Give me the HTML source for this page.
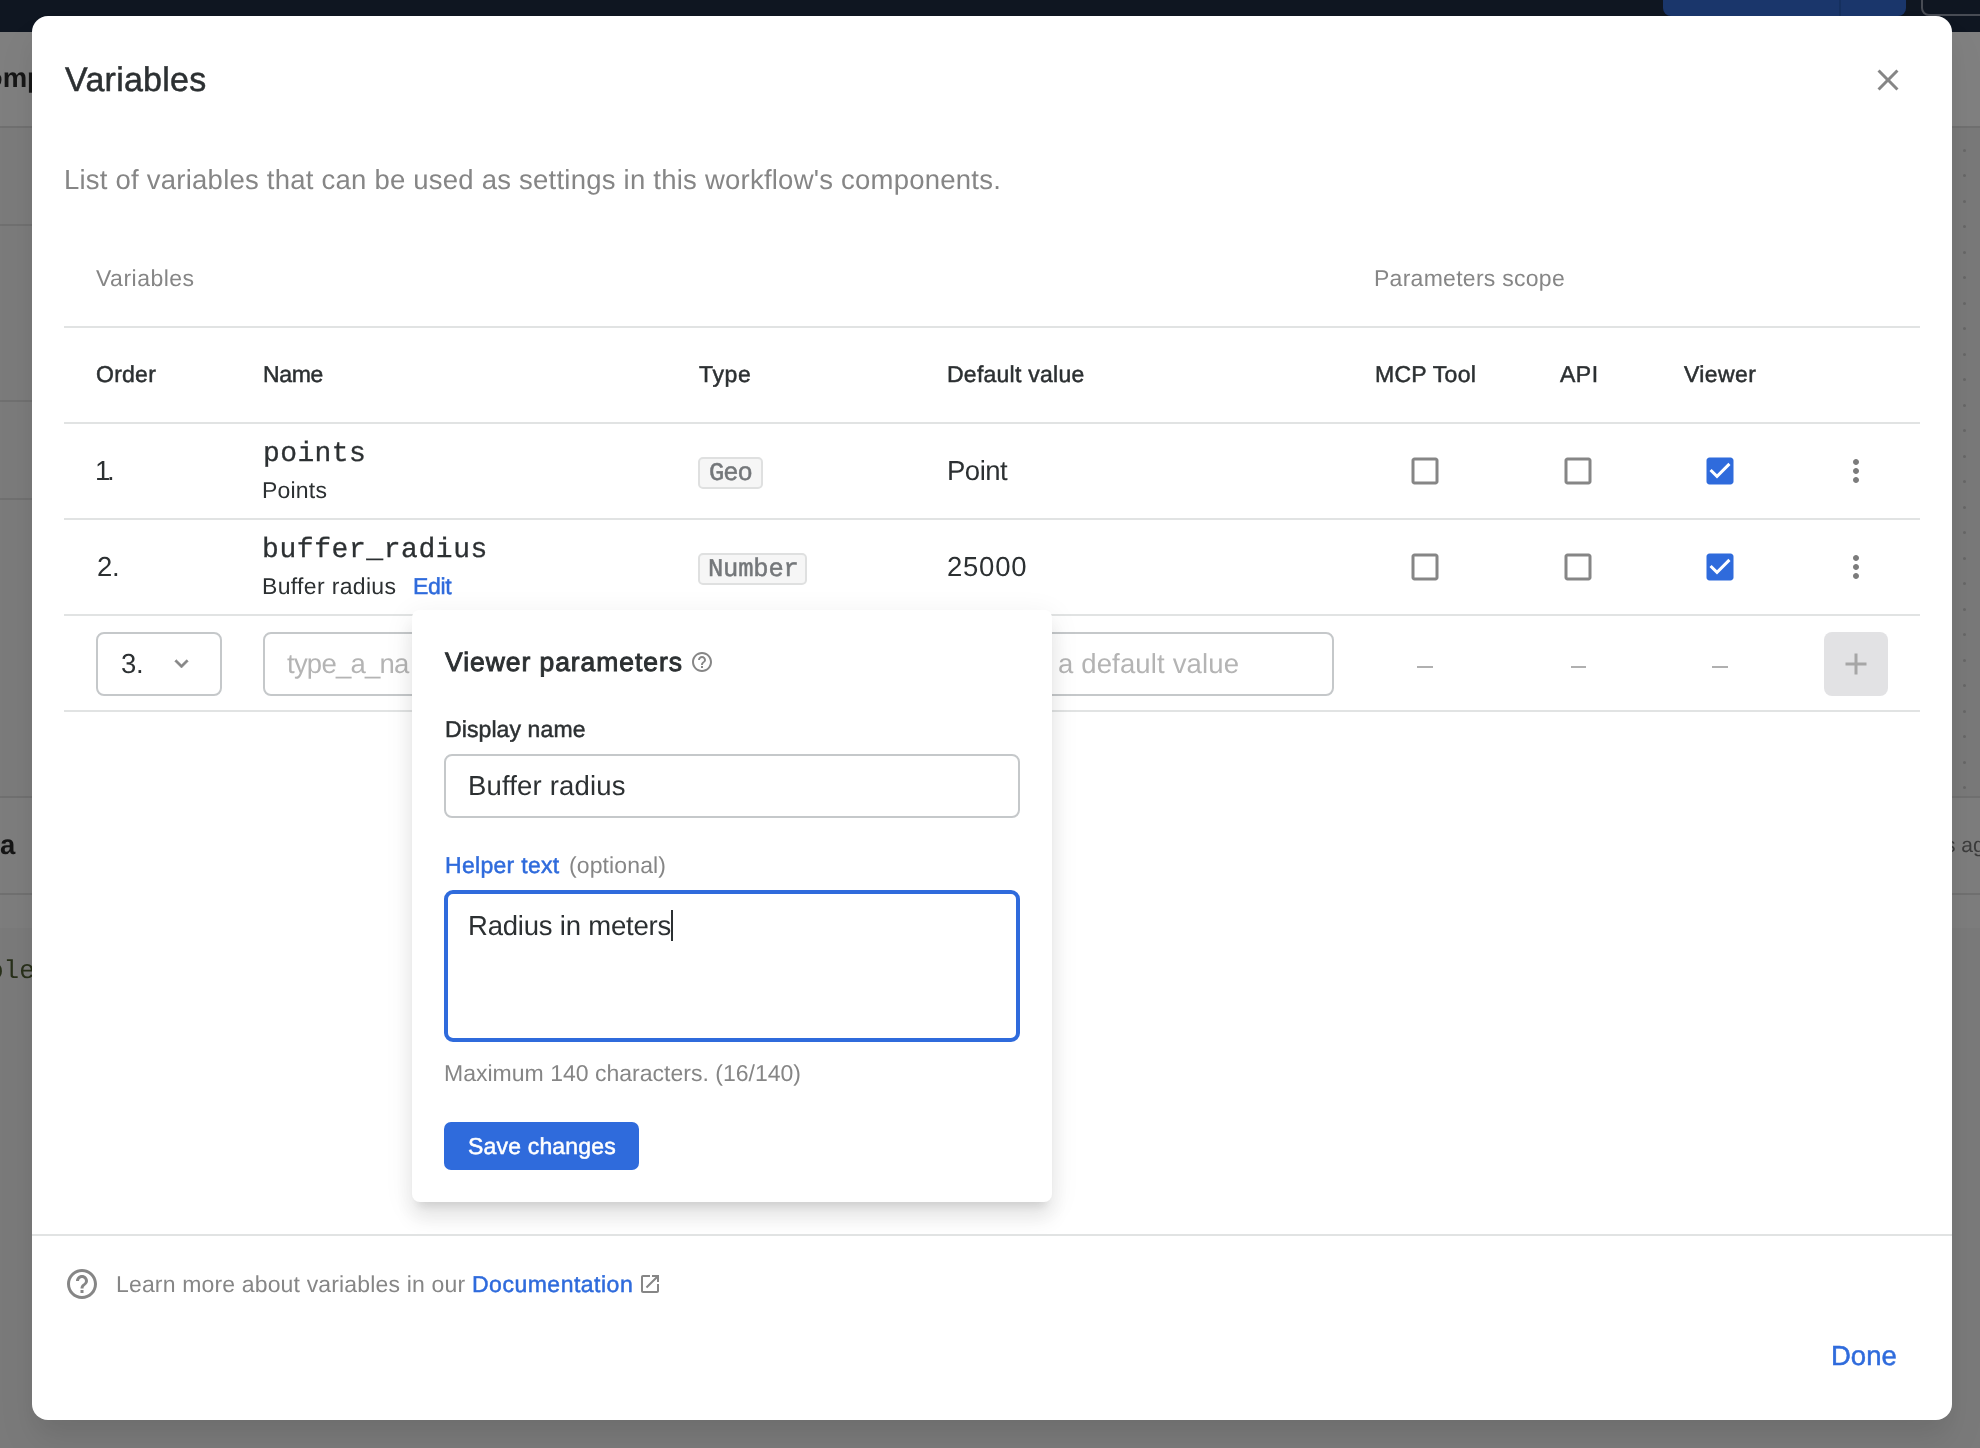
<!DOCTYPE html>
<html lang="en">
<head>
<meta charset="utf-8">
<title>Variables</title>
<style>
*{box-sizing:border-box;margin:0;padding:0}
html,body{width:1980px;height:1448px;overflow:hidden;background:#7f7f7f;font-family:"Liberation Sans",sans-serif;}
body{position:relative}
.abs{position:absolute}
.t{position:absolute;white-space:nowrap;height:40px;line-height:40px;margin-top:-20px;color:#2c3032;will-change:transform;-webkit-font-smoothing:antialiased;text-rendering:geometricPrecision}
.mono{font-family:"Liberation Mono",monospace}
.g{color:#868686}
.b{color:#2f6bdc}
.hl{position:absolute;height:2px;background:#e1e3e3}
/* background */
#topbar{left:0;top:0;width:1980px;height:32px;background:#0f1621}
#tb-blue{left:1663px;top:-12px;width:243px;height:28px;border-radius:8px;background:#1a366b}
#tb-div{left:1839px;top:0;width:2px;height:17px;background:#15305f}
#tb-out{left:1921px;top:-12px;width:80px;height:28px;border-radius:8px;border:2px solid #484c54;background:#0f1621}
#bg-left{left:0;top:32px;width:40px;height:1416px;background:#7b7b7b}
#bg-left2{left:0;top:32px;width:40px;height:94px;background:#7f7f7f}
#bg-right{left:1940px;top:32px;width:40px;height:1416px;background:#797979}
#bg-right2{left:1940px;top:32px;width:40px;height:94px;background:#808080}
#bg-band{left:0;top:796px;width:1980px;height:132px;background:#7d7d7d}
#bg-low{left:0;top:928px;width:1980px;height:520px;background:#7a7a7a}
.bl{position:absolute;height:2px;background:#707070}
.bd{position:absolute;left:1963px;width:3px;height:3px;border-radius:50%;background:#686868}
/* modal */
#modal{left:32px;top:16px;width:1920px;height:1404px;background:#fff;border-radius:16px;box-shadow:0 16px 28px -4px rgba(0,0,0,.07),0 24px 40px 4px rgba(0,0,0,.04)}
.badge{position:absolute;height:32px;border:2px solid #dfe0e0;border-radius:5px;background:#f6f6f6}
.inp{position:absolute;border:2px solid #c5c8ca;border-radius:8px;background:#fff}
.h{font-size:23px;color:#2c3032;-webkit-text-stroke:0.5px currentColor}
.m{-webkit-text-stroke:0.5px currentColor}
.bt{font-size:25.5px;color:#74777a;-webkit-text-stroke:0.5px currentColor}
.ph{color:#b4b4b4}
.dash{width:15.5px;height:2px;background:#b0b0b0}
#pop{left:412px;top:610px;width:640px;height:592px;background:#fff;border-radius:8px;box-shadow:0 10px 10px -6px rgba(0,0,0,.10),0 16px 20px 2px rgba(0,0,0,.07),0 6px 28px 4px rgba(0,0,0,.055)}
</style>
</head>
<body>
<!-- background app -->
<div class="abs" id="bg-left"></div>
<div class="abs" id="bg-left2"></div>
<div class="abs" id="bg-right"></div>
<div class="abs" id="bg-right2"></div>
<div class="abs" id="bg-low"></div>
<div class="abs" id="bg-band"></div>
<div class="abs" id="topbar"></div>
<div class="abs" id="tb-blue"></div>
<div class="abs" id="tb-div"></div>
<div class="abs" id="tb-out"></div>
<div class="bl" style="left:0;top:126px;width:1980px"></div>
<div class="bl" style="left:0;top:224px;width:40px"></div>
<div class="bl" style="left:0;top:400px;width:40px"></div>
<div class="bl" style="left:0;top:498px;width:40px"></div>
<div class="bl" style="left:0;top:796px;width:1980px"></div>
<div class="bl" style="left:0;top:893px;width:1980px"></div>
<div class="t" id="bgt1" style="left:-34px;top:78px;font-size:27.5px;font-weight:bold;color:#161616">Comp</div>
<div class="t" id="bgt2" style="left:0px;top:845px;font-size:27.5px;font-weight:bold;color:#161616">a</div>
<div class="t mono" id="bgt3" style="left:-12px;top:971px;font-size:26px;color:#28301a;width:44px;overflow:hidden">ole</div>
<div class="t" id="bgt4" style="left:1945px;top:846px;font-size:21px;color:#3c3c3c">s ago</div>
<div class="bd" style="top:148.5px"></div><div class="bd" style="top:174px"></div><div class="bd" style="top:199.5px"></div><div class="bd" style="top:225px"></div><div class="bd" style="top:250.5px"></div><div class="bd" style="top:276px"></div><div class="bd" style="top:301.5px"></div><div class="bd" style="top:327px"></div><div class="bd" style="top:352.5px"></div><div class="bd" style="top:378px"></div><div class="bd" style="top:403.5px"></div><div class="bd" style="top:429px"></div><div class="bd" style="top:454.5px"></div><div class="bd" style="top:480px"></div><div class="bd" style="top:505.5px"></div><div class="bd" style="top:531px"></div><div class="bd" style="top:556.5px"></div><div class="bd" style="top:582px"></div><div class="bd" style="top:607.5px"></div><div class="bd" style="top:633px"></div><div class="bd" style="top:658.5px"></div><div class="bd" style="top:684px"></div><div class="bd" style="top:709.5px"></div><div class="bd" style="top:735px"></div><div class="bd" style="top:760.5px"></div><div class="bd" style="top:786px"></div>

<!-- modal -->
<div class="abs" id="modal"></div>

<!-- modal header -->
<div class="t" id="title" style="left:65px;top:80px;font-size:34px;-webkit-text-stroke:0.5px currentColor;letter-spacing:0.25px">Variables</div>
<svg class="abs" style="left:1870px;top:62px" width="36" height="36" viewBox="0 0 24 24"><path d="M19 6.41L17.59 5 12 10.59 6.41 5 5 6.41 10.59 12 5 17.59 6.41 19 12 13.41 17.59 19 19 17.59 13.41 12z" fill="#868686"/></svg>
<div class="t g" id="subtitle" style="left:64px;top:180px;font-size:27.5px;letter-spacing:0.23px">List of variables that can be used as settings in this workflow's components.</div>

<!-- table group header -->
<div class="t g" id="gh1" style="left:96px;top:278px;font-size:23px;letter-spacing:0.49px">Variables</div>
<div class="t g" id="gh2" style="left:1374px;top:278px;font-size:23px;letter-spacing:0.27px">Parameters scope</div>
<div class="hl" style="left:64px;top:326px;width:1856px"></div>

<!-- column headers -->
<div class="t h" id="h1" style="left:96px;top:374px;letter-spacing:0.25px">Order</div>
<div class="t h" id="h2" style="left:263px;top:374px;letter-spacing:-0.33px">Name</div>
<div class="t h" id="h3" style="left:699px;top:374px;letter-spacing:0.66px">Type</div>
<div class="t h" id="h4" style="left:947px;top:374px;letter-spacing:0.25px">Default value</div>
<div class="t h" id="h5" style="left:1375px;top:374px;letter-spacing:0.29px">MCP Tool</div>
<div class="t h" id="h6" style="left:1560px;top:374px;letter-spacing:0.5px">API</div>
<div class="t h" id="h7" style="left:1684px;top:374px;letter-spacing:0.4px">Viewer</div>
<div class="hl" style="left:64px;top:422px;width:1856px"></div>

<!-- row 1 -->
<div class="t" id="r1n" style="left:95px;top:471px;font-size:27.5px">1</div><div class="t" id="r1n2" style="left:107px;top:471px;font-size:27.5px">.</div>
<div class="t mono" id="r1m" style="left:263px;top:455px;font-size:28px;-webkit-text-stroke:0.3px currentColor;letter-spacing:0.4px">points</div>
<div class="t" id="r1d" style="left:262px;top:490px;font-size:23px;letter-spacing:0.2px">Points</div>
<div class="badge" style="left:698px;top:457px;width:65px"></div>
<div class="t mono bt" id="r1b" style="left:709px;top:474px;letter-spacing:-1px">Geo</div>
<div class="t" id="r1v" style="left:947px;top:471px;font-size:27.5px;letter-spacing:-0.5px">Point</div>
<svg class="abs" style="left:1407px;top:453px" width="36" height="36" viewBox="0 0 24 24"><path d="M19 5v14H5V5h14m0-2H5c-1.1 0-2 .9-2 2v14c0 1.1.9 2 2 2h14c1.1 0 2-.9 2-2V5c0-1.1-.9-2-2-2z" fill="#868686"/></svg><svg class="abs" style="left:1560px;top:453px" width="36" height="36" viewBox="0 0 24 24"><path d="M19 5v14H5V5h14m0-2H5c-1.1 0-2 .9-2 2v14c0 1.1.9 2 2 2h14c1.1 0 2-.9 2-2V5c0-1.1-.9-2-2-2z" fill="#868686"/></svg><div class="abs" style="left:1708px;top:459px;width:24px;height:24px;background:#fff"></div><svg class="abs" style="left:1702px;top:453px" width="36" height="36" viewBox="0 0 24 24"><path d="M19 3H5c-1.11 0-2 .9-2 2v14c0 1.1.89 2 2 2h14c1.11 0 2-.9 2-2V5c0-1.1-.89-2-2-2zm-9 14l-5-5 1.41-1.41L10 14.17l7.59-7.59L19 8l-9 9z" fill="#2f6bdc"/></svg><svg class="abs" style="left:1838px;top:453px" width="36" height="36" viewBox="0 0 24 24"><path d="M12 8c1.1 0 2-.9 2-2s-.9-2-2-2-2 .9-2 2 .9 2 2 2zm0 2c-1.1 0-2 .9-2 2s.9 2 2 2 2-.9 2-2-.9-2-2-2zm0 6c-1.1 0-2 .9-2 2s.9 2 2 2 2-.9 2-2-.9-2-2-2z" fill="#7c7c7c"/></svg>
<div class="hl" style="left:64px;top:518px;width:1856px"></div>

<!-- row 2 -->
<div class="t" id="r2n" style="left:97px;top:567px;font-size:27.5px">2</div><div class="t" id="r2n2" style="left:112px;top:567px;font-size:27.5px">.</div>
<div class="t mono" id="r2m" style="left:262px;top:551px;font-size:28px;-webkit-text-stroke:0.3px currentColor;letter-spacing:0.58px">buffer_radius</div>
<div class="t" id="r2d" style="left:262px;top:586px;font-size:23px;letter-spacing:0.33px">Buffer radius</div>
<div class="t b m" id="r2e" style="left:413px;top:586px;font-size:23px;letter-spacing:-0.33px">Edit</div>
<div class="badge" style="left:698px;top:553px;width:109px"></div>
<div class="t mono bt" id="r2b" style="left:708px;top:570px;letter-spacing:-0.2px">Number</div>
<div class="t" id="r2v" style="left:947px;top:567px;font-size:27.5px;letter-spacing:0.75px">25000</div>
<svg class="abs" style="left:1407px;top:549px" width="36" height="36" viewBox="0 0 24 24"><path d="M19 5v14H5V5h14m0-2H5c-1.1 0-2 .9-2 2v14c0 1.1.9 2 2 2h14c1.1 0 2-.9 2-2V5c0-1.1-.9-2-2-2z" fill="#868686"/></svg><svg class="abs" style="left:1560px;top:549px" width="36" height="36" viewBox="0 0 24 24"><path d="M19 5v14H5V5h14m0-2H5c-1.1 0-2 .9-2 2v14c0 1.1.9 2 2 2h14c1.1 0 2-.9 2-2V5c0-1.1-.9-2-2-2z" fill="#868686"/></svg><div class="abs" style="left:1708px;top:555px;width:24px;height:24px;background:#fff"></div><svg class="abs" style="left:1702px;top:549px" width="36" height="36" viewBox="0 0 24 24"><path d="M19 3H5c-1.11 0-2 .9-2 2v14c0 1.1.89 2 2 2h14c1.11 0 2-.9 2-2V5c0-1.1-.89-2-2-2zm-9 14l-5-5 1.41-1.41L10 14.17l7.59-7.59L19 8l-9 9z" fill="#2f6bdc"/></svg><svg class="abs" style="left:1838px;top:549px" width="36" height="36" viewBox="0 0 24 24"><path d="M12 8c1.1 0 2-.9 2-2s-.9-2-2-2-2 .9-2 2 .9 2 2 2zm0 2c-1.1 0-2 .9-2 2s.9 2 2 2 2-.9 2-2-.9-2-2-2zm0 6c-1.1 0-2 .9-2 2s.9 2 2 2 2-.9 2-2-.9-2-2-2z" fill="#7c7c7c"/></svg>
<div class="hl" style="left:64px;top:614px;width:1856px"></div>

<!-- row 3 (new variable) -->
<div class="inp" style="left:96px;top:632px;width:126px;height:64px"></div>
<div class="t" id="r3n" style="left:121px;top:664px;font-size:27.5px">3</div><div class="t" id="r3n2" style="left:136px;top:664px;font-size:27.5px">.</div>
<svg class="abs" style="left:167.7px;top:650.1px" width="27" height="27" viewBox="0 0 24 24"><path d="M16.59 8.59L12 13.17 7.41 8.59 6 10l6 6 6-6z" fill="#868686" stroke="#868686" stroke-width="0.5"/></svg>
<div class="inp" style="left:263px;top:632px;width:400px;height:64px"></div>
<div class="t ph" id="r3p" style="left:287px;top:664px;font-size:27.5px;letter-spacing:-0.76px">type_a_na</div>
<div class="inp" style="left:930px;top:632px;width:404px;height:64px"></div>
<div class="t ph" id="r3q" style="left:1058px;top:664px;font-size:27.5px;letter-spacing:0.15px">a default value</div>
<div class="abs dash" style="left:1417px;top:665.5px"></div>
<div class="abs dash" style="left:1570.5px;top:665.5px"></div>
<div class="abs dash" style="left:1712.3px;top:665.5px"></div>
<div class="abs" style="left:1824px;top:632px;width:64px;height:64px;border-radius:8px;background:#e2e2e4"></div>
<svg class="abs" style="left:1838px;top:646px" width="36" height="36" viewBox="0 0 24 24"><path d="M19 13h-6v6h-2v-6H5v-2h6V5h2v6h6v2z" fill="#a6a6a6"/></svg>
<div class="hl" style="left:64px;top:710px;width:1856px"></div>

<!-- popover -->
<div class="abs" id="pop"></div>
<div class="t" id="p1" style="left:445px;top:662px;font-size:26.5px;-webkit-text-stroke:0.9px currentColor;letter-spacing:0.94px">Viewer parameters</div>
<svg class="abs" style="left:690px;top:649.75px" width="24" height="24" viewBox="0 0 24 24"><path d="M11 18h2v-2h-2v2zm1-16C6.48 2 2 6.48 2 12s4.48 10 10 10 10-4.48 10-10S17.52 2 12 2zm0 18c-4.41 0-8-3.59-8-8s3.59-8 8-8 8 3.59 8 8-3.59 8-8 8zm0-14c-2.21 0-4 1.79-4 4h2c0-1.1.9-2 2-2s2 .9 2 2c0 2-3 1.75-3 5h2c0-2.25 3-2.5 3-5 0-2.21-1.79-4-4-4z" fill="#868686"/></svg>
<div class="t m" id="p2" style="left:445px;top:729px;font-size:23px;letter-spacing:0.1px">Display name</div>
<div class="inp" style="left:444px;top:754px;width:576px;height:64px"></div>
<div class="t" id="p3" style="left:468px;top:786px;font-size:27.5px;letter-spacing:0.17px">Buffer radius</div>
<div class="t b m" id="p4" style="left:445px;top:865px;font-size:23px;letter-spacing:0.3px">Helper text</div>
<div class="t g" id="p5" style="left:569px;top:865px;font-size:23px;letter-spacing:0.12px">(optional)</div>
<div class="abs" style="left:444px;top:890px;width:576px;height:152px;border:4px solid #2f6bdc;border-radius:9px;background:#fff"></div>
<div class="t" id="p6" style="left:468px;top:926px;font-size:27.5px;letter-spacing:-0.2px">Radius in meters</div>
<div class="abs" style="left:671px;top:910px;width:2px;height:31px;background:#2c3032"></div>
<div class="t g" id="p7" style="left:444px;top:1073px;font-size:23px;letter-spacing:0.01px">Maximum 140 characters. (16/140)</div>
<div class="abs" style="left:444px;top:1122px;width:195px;height:48px;border-radius:7px;background:#2f6bdc"></div>
<div class="t m" id="p8" style="left:468px;top:1146px;font-size:23px;color:#fff;letter-spacing:0.18px">Save changes</div>

<!-- footer -->
<div class="hl" style="left:32px;top:1234px;width:1920px"></div>
<svg class="abs" style="left:64px;top:1266px" width="36" height="36" viewBox="0 0 24 24"><path d="M11 18h2v-2h-2v2zm1-16C6.48 2 2 6.48 2 12s4.48 10 10 10 10-4.48 10-10S17.52 2 12 2zm0 18c-4.41 0-8-3.59-8-8s3.59-8 8-8 8 3.59 8 8-3.59 8-8 8zm0-14c-2.21 0-4 1.79-4 4h2c0-1.1.9-2 2-2s2 .9 2 2c0 2-3 1.75-3 5h2c0-2.25 3-2.5 3-5 0-2.21-1.79-4-4-4z" fill="#868686"/></svg>
<div class="t g" id="f1" style="left:116px;top:1284px;font-size:23px;letter-spacing:0.16px">Learn more about variables in our</div>
<div class="t b m" id="f2" style="left:472px;top:1284px;font-size:23px;letter-spacing:0.5px">Documentation</div>
<svg class="abs" style="left:638.3px;top:1272px" width="24" height="24" viewBox="0 0 24 24"><path d="M19 19H5V5h7V3H5c-1.11 0-2 .9-2 2v14c0 1.1.89 2 2 2h14c1.1 0 2-.9 2-2v-7h-2v7zM14 3v2h3.59l-9.83 9.83 1.41 1.41L19 6.41V10h2V3h-7z" fill="#868686"/></svg>
<div class="t b m" id="done" style="left:1831px;top:1356px;font-size:27.5px;letter-spacing:0px">Done</div>

</body>
</html>
